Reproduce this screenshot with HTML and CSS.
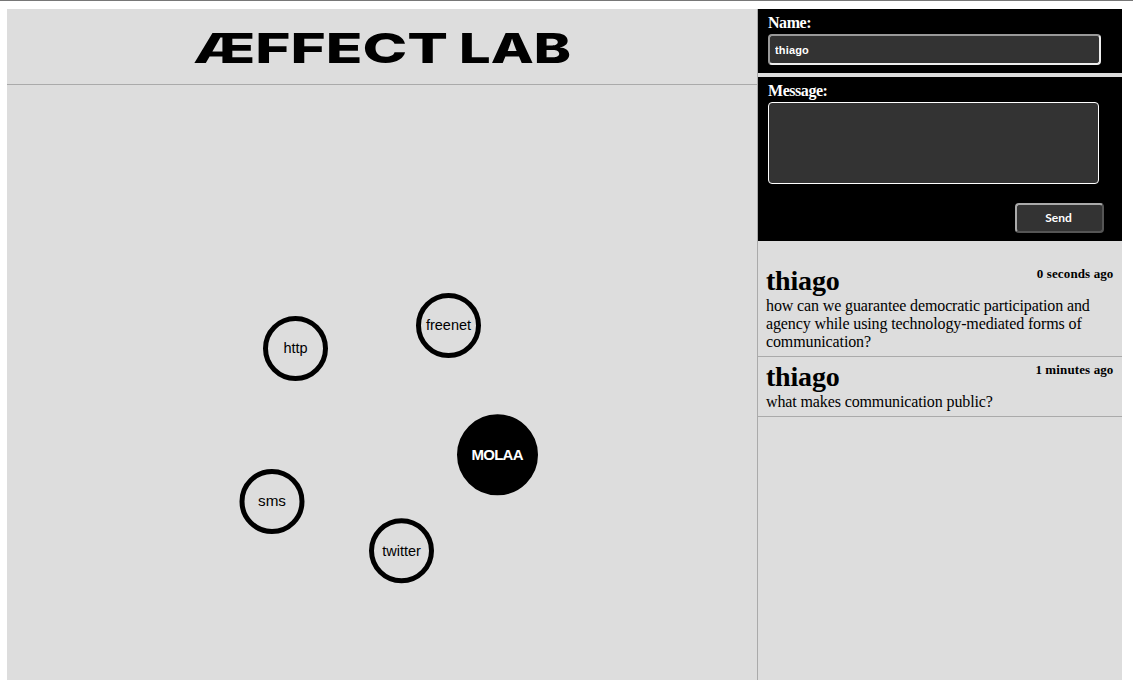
FILE: index.html
```
<!DOCTYPE html>
<html lang="en">
<head>
<meta charset="utf-8">
<title>Æffect Lab</title>
<link rel="stylesheet" href="styles.css">
</head>
<body>
<div class="page">
  <main class="main">
    <header class="header">
      <svg class="logo" width="380" height="40" viewBox="0 0 380 40" role="img" aria-label="Æffect Lab">
        <text class="wordmark" x="-1" y="35" textLength="255" lengthAdjust="spacingAndGlyphs">ÆFFECT</text>
        <text class="wordmark" x="265" y="35" textLength="112" lengthAdjust="spacingAndGlyphs">LAB</text>
      </svg>
    </header>
    <section class="canvas">
      <svg class="graph" width="750" height="595" viewBox="0 0 750 595">
        <g class="node"><circle cx="288.5" cy="263.5" r="30"/><text x="288.5" y="268">http</text></g>
        <g class="node"><circle cx="441.5" cy="240.5" r="30"/><text x="441.5" y="245">freenet</text></g>
        <g class="node"><circle cx="265" cy="416.5" r="30"/><text x="265" y="421" textLength="28" lengthAdjust="spacingAndGlyphs">sms</text></g>
        <g class="node"><circle cx="394.5" cy="465.7" r="30"/><text x="394.5" y="471">twitter</text></g>
        <g class="node active"><circle cx="490.5" cy="369.8" r="38"/><text x="490.5" y="375" textLength="52">MOLAA</text></g>
      </svg>
    </section>
  </main>
  <aside class="sidebar">
    <form class="form">
      <div class="panel name-panel">
        <label class="label" for="name">Name:</label>
        <input class="field name-input" id="name" type="text" value="thiago">
      </div>
      <div class="panel message-panel">
        <label class="label" for="message">Message:</label>
        <textarea class="field message-input" id="message"></textarea>
        <button class="send" type="button">Send</button>
      </div>
    </form>
    <div class="messages">
      <article class="message">
        <div class="meta"><h2 class="author">thiago</h2><span class="time">0 seconds ago</span></div>
        <p class="text">how can we guarantee democratic participation and<br>agency while using technology-mediated forms of<br>communication?</p>
      </article>
      <article class="message">
        <div class="meta"><h2 class="author">thiago</h2><span class="time">1 minutes ago</span></div>
        <p class="text">what makes communication public?</p>
      </article>
    </div>
  </aside>
</div>
</body>
</html>
```

FILE: styles.css
```
* { box-sizing: border-box; }
html { height: 100%; overflow: hidden; }
body {
  margin: 0;
  height: 100%;
  padding: 8px 11px 0 7px;
  border-top: 1px solid #777;
  background: #fff;
  color: #000;
  font-family: "Liberation Serif", "Times New Roman", serif;
  font-size: 16px;
  overflow: hidden;
}
.page { display: flex; height: 671px; background: #ddd; }
.main { width: 750px; display: flex; flex-direction: column; }
.header {
  height: 76px;
  padding: 19px 0 0 187px;
  border-bottom: 1px solid #aaa;
}
.logo { display: block; overflow: visible; }
.wordmark { font-family: Inter, "Liberation Sans", sans-serif; font-size: 41.3px; font-weight: 800; }
.graph { display: block; }
.node circle { fill: none; stroke: #000; stroke-width: 5px; }
.node text {
  font-family: "Liberation Sans", Arial, sans-serif;
  font-size: 14.5px;
  text-anchor: middle;
}
.node.active circle { fill: #000; }
.node.active text { fill: #fff; font-size: 15px; font-weight: bold; }
.sidebar { width: 365px; border-left: 1px solid #aaa; }
.form { display: flex; flex-direction: column; gap: 4px; }
.panel { display: flex; flex-direction: column; padding: 5px 18px 0 10px; background: #000; color: #fff; }
.name-panel { height: 64px; }
.message-panel { height: 164px; }
.label { height: 20px; line-height: 18px; font-weight: bold; letter-spacing: -0.45px; }
.field {
  display: block;
  margin: 0;
  border-radius: 4px;
  background: #333;
  color: #fff;
  font: bold 11px "Liberation Sans", Arial, sans-serif;
  letter-spacing: 0.15px;
  outline: none;
}
.name-input {
  width: 333px;
  height: 31px;
  padding: 0 5px;
  border: 2px solid;
  border-color: #999 #eee #eee #999;
}
.message-input { width: 331px; height: 82px; border: 1px solid #fff; resize: none; }
.send {
  align-self: flex-end;
  width: 89px;
  height: 30px;
  margin-top: 19px;
  padding: 0 2px 2px 0;
  border: 2px solid;
  border-color: #aaa #555 #555 #aaa;
  border-radius: 4px;
  background: #333;
  color: #fff;
  font: bold 12px Lato, "Open Sans", sans-serif;
}
.messages { padding-top: 20px; }
.message { padding: 5px 8px 5px; border-bottom: 1px solid #aaa; }
.meta { display: flex; justify-content: space-between; height: 31px; }
.author { margin: 0; font-size: 28px; line-height: 29px; letter-spacing: -0.2px; }
.time { margin-right: 0.5px; font-size: 13px; font-weight: bold; line-height: 16px; letter-spacing: 0.12px; }
.text { margin: 0; line-height: 18px; letter-spacing: -0.12px; }
```
